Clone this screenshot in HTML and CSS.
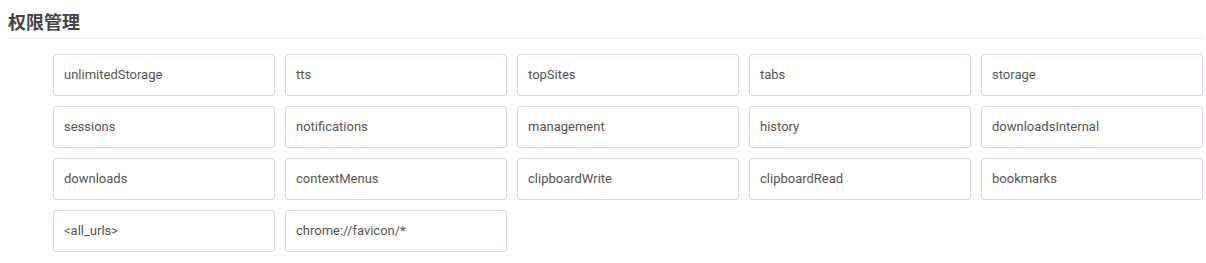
FILE: index.html
```html
<!DOCTYPE html>
<html lang="zh">
<head>
<meta charset="utf-8">
<link rel="stylesheet" href="styles.css">
</head>
<body>
<div class="page">
  <h2 class="title">权限管理</h2>
  <div class="grid">
    <div class="item">unlimitedStorage</div>
    <div class="item">tts</div>
    <div class="item">topSites</div>
    <div class="item">tabs</div>
    <div class="item">storage</div>
    <div class="item">sessions</div>
    <div class="item">notifications</div>
    <div class="item">management</div>
    <div class="item">history</div>
    <div class="item">downloadsInternal</div>
    <div class="item">downloads</div>
    <div class="item">contextMenus</div>
    <div class="item">clipboardWrite</div>
    <div class="item">clipboardRead</div>
    <div class="item">bookmarks</div>
    <div class="item">&lt;all_urls&gt;</div>
    <div class="item">chrome://favicon/*</div>
  </div>
</div>
</body>
</html>
```
FILE: styles.css
```css
html, body {
  margin: 0;
  padding: 0;
  background: #fff;
}
.page {
  padding: 0 2px 0 8px;
  font-family: Roboto, "Noto Sans CJK SC", sans-serif;
}
.title {
  margin: 0;
  padding-top: 10px;
  height: 28px;
  line-height: 22px;
  font-size: 18px;
  font-weight: bold;
  color: #444;
  font-family: "Noto Sans CJK SC", sans-serif;
  border-bottom: 1px solid #eceef8;
}
.grid {
  display: grid;
  grid-template-columns: repeat(5, 222px);
  grid-auto-rows: 42px;
  gap: 10px;
  padding: 15px 0 0 45px;
}
.item {
  box-sizing: border-box;
  border: 1px solid #d3dbf8;
  border-radius: 3px;
  padding: 0 10px 2px;
  display: flex;
  align-items: center;
  font-size: 13px;
  color: #555;
}
```
